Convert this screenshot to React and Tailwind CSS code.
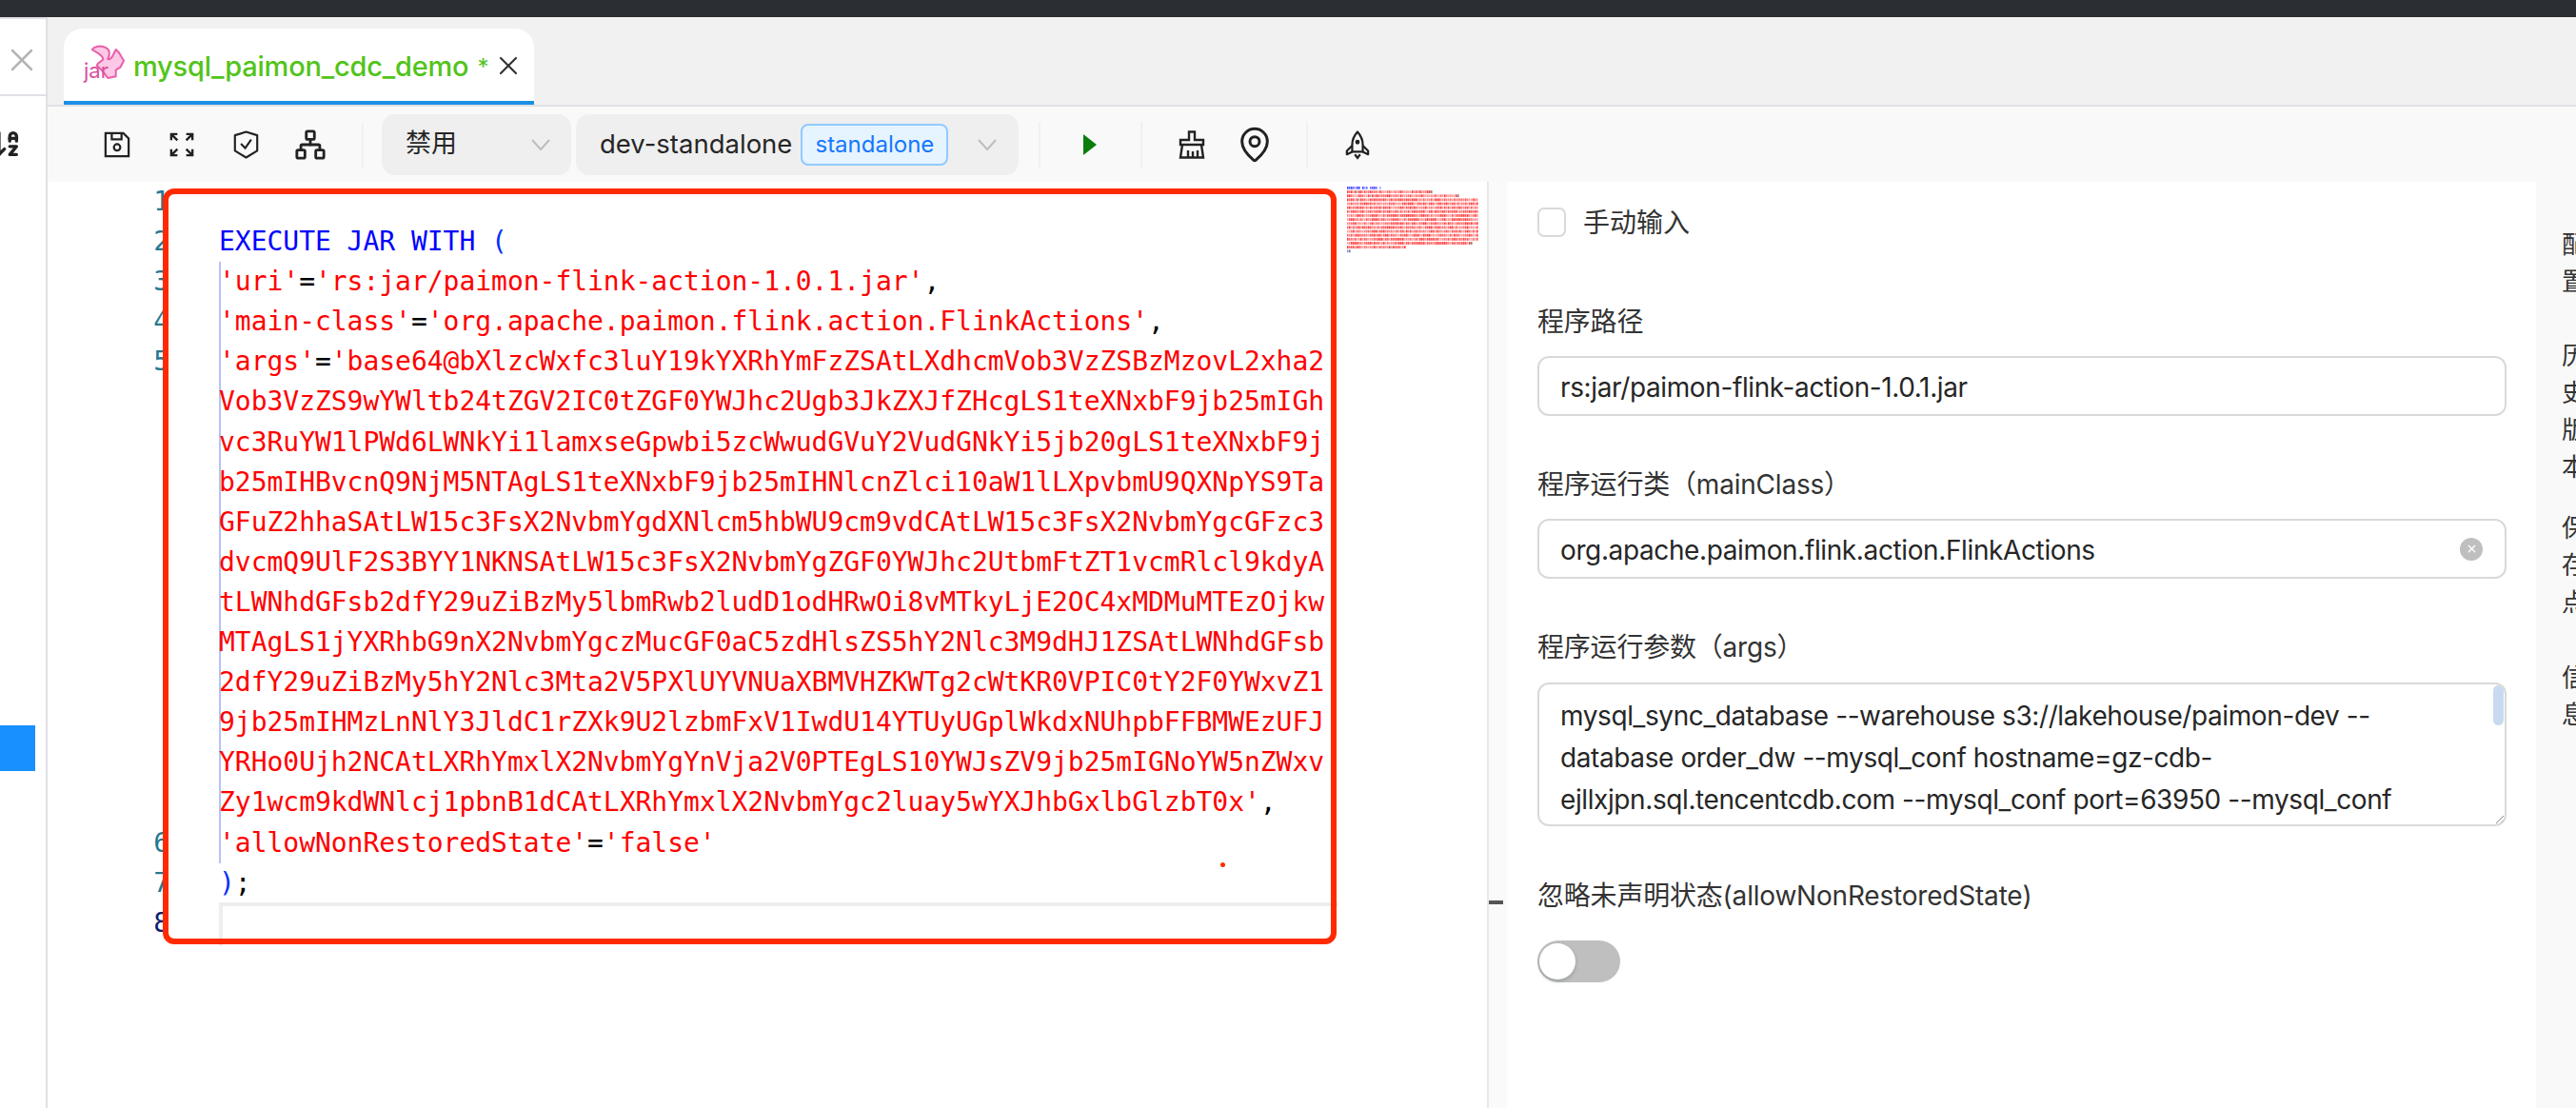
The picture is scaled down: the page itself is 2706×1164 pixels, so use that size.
import React from "react";
import { ArrowDownAZ, Network, MapPin, X } from "lucide-react";

const KW = "#0000ff";
const STR = "#ff0000";
const TXT = "#000000";

// each row is a list of [text, color]
const codeRows = [
  { n: 1, parts: [] },
  { n: 2, parts: [["EXECUTE JAR WITH ", KW], ["(", "#0431fa"]] },
  { n: 3, parts: [["'uri'", STR], ["=", TXT], ["'rs:jar/paimon-flink-action-1.0.1.jar'", STR], [",", TXT]] },
  { n: 4, parts: [["'main-class'", STR], ["=", TXT], ["'org.apache.paimon.flink.action.FlinkActions'", STR], [",", TXT]] },
  { n: 5, parts: [["'args'", STR], ["=", TXT], ["'base64@bXlzcWxfc3luY19kYXRhYmFzZSAtLXdhcmVob3VzZSBzMzovL2xha2", STR]] },
  { parts: [["Vob3VzZS9wYWltb24tZGV2IC0tZGF0YWJhc2Ugb3JkZXJfZHcgLS1teXNxbF9jb25mIGh", STR]] },
  { parts: [["vc3RuYW1lPWd6LWNkYi1lamxseGpwbi5zcWwudGVuY2VudGNkYi5jb20gLS1teXNxbF9j", STR]] },
  { parts: [["b25mIHBvcnQ9NjM5NTAgLS1teXNxbF9jb25mIHNlcnZlci10aW1lLXpvbmU9QXNpYS9Ta", STR]] },
  { parts: [["GFuZ2hhaSAtLW15c3FsX2NvbmYgdXNlcm5hbWU9cm9vdCAtLW15c3FsX2NvbmYgcGFzc3", STR]] },
  { parts: [["dvcmQ9UlF2S3BYY1NKNSAtLW15c3FsX2NvbmYgZGF0YWJhc2UtbmFtZT1vcmRlcl9kdyA", STR]] },
  { parts: [["tLWNhdGFsb2dfY29uZiBzMy5lbmRwb2ludD1odHRwOi8vMTkyLjE2OC4xMDMuMTEzOjkw", STR]] },
  { parts: [["MTAgLS1jYXRhbG9nX2NvbmYgczMucGF0aC5zdHlsZS5hY2Nlc3M9dHJ1ZSAtLWNhdGFsb", STR]] },
  { parts: [["2dfY29uZiBzMy5hY2Nlc3Mta2V5PXlUYVNUaXBMVHZKWTg2cWtKR0VPIC0tY2F0YWxvZ1", STR]] },
  { parts: [["9jb25mIHMzLnNlY3JldC1rZXk9U2lzbmFxV1IwdU14YTUyUGplWkdxNUhpbFFBMWEzUFJ", STR]] },
  { parts: [["YRHo0Ujh2NCAtLXRhYmxlX2NvbmYgYnVja2V0PTEgLS10YWJsZV9jb25mIGNoYW5nZWxv", STR]] },
  { parts: [["Zy1wcm9kdWNlcj1pbnB1dCAtLXRhYmxlX2NvbmYgc2luay5wYXJhbGxlbGlzbT0x'", STR], [",", TXT]] },
  { n: 6, parts: [["'allowNonRestoredState'", STR], ["=", TXT], ["'false'", STR]] },
  { n: 7, parts: [[")", "#0431fa"], [";", TXT]] },
];

const CodeRow = ({ row }) => (
  <div className="h-[42.1px] leading-[42.1px] whitespace-pre tracking-[-0.03px]">
    {row.parts.map(([text, color], i) => (
      <span key={i} style={{ color }}>
        {text}
      </span>
    ))}
  </div>
);

const Minimap = () => (
  <svg width="140" height="76" viewBox="0 0 140 76">
    {codeRows.map((row, y) => {
      let x = 0;
      return row.parts.map(([text, color]) =>
        text.split("").map((ch) => {
          x += 2;
          if (ch === " ") return null;
          return (
            <rect
              key={`${y}-${x}`}
              x={x - 2}
              y={(y - 1) * 4.15}
              width="1.6"
              height="2.8"
              fill={color === STR ? "#ff3030" : color === TXT ? "#777777" : "#3c3cff"}
              opacity={0.45 + (ch.charCodeAt(0) % 5) * 0.12}
            />
          );
        })
      );
    })}
  </svg>
);

const JarIcon = () => (
  <svg width="46" height="44" viewBox="0 0 46 44">
    <path
      d="M10.7 6 C13 3 20 1 25.7 4.3 C29 6 30 11 27.3 16 C30 17 31 15 32.3 12.7 L35.7 6 L39 9.3 L44 17.7 L40.7 24.3 L35.7 27.7 L35.7 34.3 L27.3 36 L22.3 29.3 L15.7 22.7 C17 19 22 18 22.3 16 C22 12 15 9 10.7 6 Z"
      fill="#fdc8e6"
      stroke="#ea5fa9"
      strokeWidth="2"
      strokeLinejoin="round"
    />
    <text x="2" y="36" fontSize="22" fill="#d94f9f" fontFamily="Inter, sans-serif">
      jar
    </text>
  </svg>
);

const SaveIcon = () => (
  <svg width="28" height="30" viewBox="0 0 30 30" fill="none" stroke="#222" strokeWidth="2.4">
    <path d="M2 2 H22 L28 8 V28 H2 Z" />
    <path d="M9 2 V9 H20 V2" />
    <circle cx="15" cy="18" r="3.6" />
  </svg>
);

const FullIcon = () => (
  <svg width="26" height="28" viewBox="0 0 28 28" fill="none" stroke="#222" strokeWidth="2.6">
    <path d="M2 9 V2 H9 M2 2 L9 9" />
    <path d="M19 2 H26 V9 M26 2 L19 9" />
    <path d="M2 19 V26 H9 M2 26 L9 19" />
    <path d="M26 19 V26 H19 M26 26 L19 19" />
  </svg>
);

const ShieldIcon = () => (
  <svg width="27" height="32" viewBox="0 0 30 34" fill="none" stroke="#222" strokeWidth="2.4">
    <path d="M15 2 L28 6 V24 L15 32 L2 24 V6 Z" strokeLinejoin="round" />
    <path d="M9 16 L14 21 L21 11" />
  </svg>
);

const BrushIcon = () => (
  <svg width="30" height="30" viewBox="0 0 30 30" fill="none" stroke="#222" strokeWidth="2.4">
    <path d="M12 1.5 H18 V10 H27 V15 H3 V10 H12 Z" />
    <path d="M5 15 L3 28.5 H27 L25 15" />
    <path d="M11 21 V28 M16 22 V28 M21 21 V28" />
  </svg>
);

const RocketIcon = () => (
  <svg width="26" height="32" viewBox="0 0 28 32" fill="none" stroke="#222" strokeWidth="2.4">
    <path d="M14 1.5 C18 6 20 10 20 16 V24 H8 V16 C8 10 10 6 14 1.5 Z" strokeLinejoin="round" />
    <path d="M8 17 L2 23 V27 L8 24 M20 17 L26 23 V27 L20 24" strokeLinejoin="round" />
    <path d="M11 27 L14 31 L17 27" />
    <circle cx="14" cy="13" r="1.4" fill="#222" />
  </svg>
);

const Chevron = () => (
  <svg width="20" height="12" viewBox="0 0 20 12" fill="none" stroke="#bdbdbd" strokeWidth="2">
    <path d="M1 1 L10 11 L19 1" />
  </svg>
);

const Divider = ({ className }) => <div className={`w-[2px] h-[48px] bg-[#f1f1f1] ${className}`} />;

const Field = ({ label, children, className }) => (
  <div className={className}>
    <div className="h-[40px] text-[28px] leading-[42px] tracking-[-0.2px] text-[#333]">{label}</div>
    {children}
  </div>
);

const TextInput = ({ value, children }) => (
  <div className="mt-[17px] h-[63px] w-[1018px] border-2 border-[#d9d9d9] rounded-[12px] bg-white pl-[22px] pr-[22px] flex items-center justify-between text-[28px] tracking-[-0.38px] text-[#262626]">
    <span className="pt-[2px]">{value}</span>
    {children}
  </div>
);

const App = () => {
  return (
    <div className="w-[2706px] h-[1164px] overflow-hidden flex flex-col bg-white font-['Inter','Noto_Sans_CJK_SC',sans-serif]">
      <div className="h-[18px] shrink-0 bg-[#2b2f33]" />

      <div className="flex flex-1 min-h-0">
        {/* left sidebar, mostly cut off */}
        <div className="w-[50px] shrink-0 border-r-2 border-[#e0e0e6] flex flex-col">
          <div className="h-[83px] border-t-2 border-b-2 border-[#e0e0e6] flex items-center justify-end pr-[5px]">
            <X size={40} strokeWidth={1.5} color="#b5b5b5" className="mt-[6px]" />
          </div>
          <div className="h-[78px] overflow-hidden relative flex items-start pt-[33px]">
            <ArrowDownAZ size={34} strokeWidth={2.4} color="#222" className="ml-[-11px] shrink-0" />
          </div>
          <div className="mt-[583px] h-[48px] w-[37px] bg-[#1890ff]" />
        </div>

        <div className="flex-1 min-w-0 flex flex-col">
          {/* tab bar */}
          <div className="h-[94px] shrink-0 bg-[#f1f1f1] border-b-2 border-[#e0e0e6] pl-[17px] pt-[12px]">
            <div className="w-[494px] h-[80px] bg-white rounded-t-[20px] border-b-4 border-[#1a8fe8] flex items-center pl-[19px] pr-[11px]">
              <JarIcon />
              <span className="ml-[8px] text-[29px] font-medium text-[#52c41a] mt-[4px] tracking-[-0.2px]">mysql_paimon_cdc_demo</span>
              <span className="ml-[9px] text-[24px] text-[#52c41a] mt-[6px]">*</span>
              <X size={32} strokeWidth={1.6} color="#333" className="ml-auto mt-[2px]" />
            </div>
          </div>

          {/* toolbar */}
          <div className="h-[79px] shrink-0 bg-[#f9f9f9] flex items-center pl-[59px]">
            <SaveIcon />
            <div className="ml-[41px]"><FullIcon /></div>
            <div className="ml-[41px]"><ShieldIcon /></div>
            <Network size={34} strokeWidth={2} color="#222" className="ml-[37px]" />
            <Divider className="ml-[37px]" />
            <div className="ml-[19px] w-[199px] h-[64px] rounded-[14px] bg-[#efefef] flex items-center justify-between pl-[25px] pr-[22px] text-[27px] text-[#262626]">
              <span>禁用</span>
              <Chevron />
            </div>
            <div className="ml-[5px] w-[465px] h-[64px] rounded-[14px] bg-[#efefef] flex items-center pl-[25px] pr-[23px] text-[27.5px] text-[#262626]">
              <span>dev-standalone</span>
              <span className="ml-[9px] h-[44px] w-[155px] flex items-center justify-center rounded-[8px] border-2 border-[#91caff] bg-[#e6f4ff] text-[#1677ff] text-[24px]">standalone</span>
              <span className="ml-auto"><Chevron /></span>
            </div>
            <Divider className="ml-[21px]" />
            <div className="ml-[45px] w-0 h-0 border-y-[11px] border-y-transparent border-l-[14px] border-l-[#0a7d0a]" />
            <Divider className="ml-[46px]" />
            <div className="ml-[37px]"><BrushIcon /></div>
            <MapPin size={40} strokeWidth={1.8} color="#222" className="ml-[31px]" />
            <Divider className="ml-[34px]" />
            <div className="ml-[39px]"><RocketIcon /></div>
          </div>

          <div className="flex-1 min-h-0 flex">
            {/* editor */}
            <div className="w-[1514px] shrink-0 relative flex font-['DejaVu_Sans_Mono',monospace] text-[28px]">
              <div className="w-[180px] shrink-0 pr-[52px] text-right text-[#237893]">
                <div className="h-[42.1px] leading-[42.1px]">1</div>
                {codeRows.slice(1).map((row, i) => (
                  <div key={i} className="h-[42.1px] leading-[42.1px]">{row.n}</div>
                ))}
                <div className="h-[42.1px] leading-[42.1px] text-[#0b216f]">8</div>
              </div>
              <div className="w-[1176px] shrink-0">
                <div className="h-[42.1px]" />
                <CodeRow row={codeRows[1]} />
                <div className="shadow-[inset_2px_0_0_#b6c2f5]">
                  {codeRows.slice(2, 17).map((row, i) => (
                    <CodeRow key={i} row={row} />
                  ))}
                </div>
                <CodeRow row={codeRows[17]} />
                <div className="h-[46px] mt-[-1px] border-t-4 border-l-4 border-[#eeeeee]" />
              </div>
              <div className="w-[158px] shrink-0 pl-[9px] pt-[5px] border-r-2 border-[#e8e8e8]">
                <Minimap />
              </div>

              {/* red annotation drawn over the screenshot */}
              <div className="absolute left-[121px] top-[7px] w-[1233px] h-[794px] border-[6px] border-[#ff2a00] rounded-[12px] pointer-events-none" />
              <div className="absolute left-[1232px] top-[715px] w-[5px] h-[5px] rounded-full bg-[#ff2a00]" />
            </div>

            {/* splitter */}
            <div className="w-[19px] shrink-0 bg-[#fafafa] relative">
              <div className="absolute left-0 top-[755px] w-[15px] h-[4px] bg-[#555]" />
            </div>

            {/* form panel */}
            <div className="w-[1081px] shrink-0 pl-[32px] pt-[26px]">
              <label className="flex items-center h-[32px]">
                <span className="w-[30px] h-[31px] rounded-[7px] border-2 border-[#d9d9d9] bg-white" />
                <span className="ml-[18px] pt-[2px] text-[28px] text-[#333]">手动输入</span>
              </label>

              <Field label="程序路径" className="mt-[68px]">
                <TextInput value="rs:jar/paimon-flink-action-1.0.1.jar" />
              </Field>

              <Field label="程序运行类（mainClass）" className="mt-[51px]">
                <TextInput value="org.apache.paimon.flink.action.FlinkActions">
                  <span className="w-[24px] h-[24px] rounded-full bg-[#bfbfbf] flex items-center justify-center mr-[1px]">
                    <X size={13} strokeWidth={2.5} color="#fff" />
                  </span>
                </TextInput>
              </Field>

              <Field label="程序运行参数（args）" className="mt-[51px]">
                <div className="mt-[18px] relative h-[151px] w-[1018px] border-2 border-[#d9d9d9] rounded-[12px] bg-white overflow-hidden pl-[22px] pt-[11px] text-[28px] leading-[44px] tracking-[-0.4px] text-[#262626] whitespace-pre">
                  <div>mysql_sync_database --warehouse s3://lakehouse/paimon-dev --</div>
                  <div>database order_dw --mysql_conf hostname=gz-cdb-</div>
                  <div>ejllxjpn.sql.tencentcdb.com --mysql_conf port=63950 --mysql_conf</div>
                  <div className="absolute right-[1px] top-[1px] w-[11px] h-[42px] rounded-[6px] bg-[#c8daf0]" />
                  <svg className="absolute right-0 bottom-0" width="11" height="12" viewBox="0 0 11 12" fill="none" stroke="#888" strokeWidth="1">
                    <path d="M2 11 L10 3 M6 11 L10 7" />
                  </svg>
                </div>
              </Field>

              <Field label="忽略未声明状态(allowNonRestoredState)" className="mt-[52px]">
                <div className="mt-[28px] w-[87px] h-[44px] rounded-full bg-[#bfbfbf] flex items-center pl-[2px]">
                  <span className="w-[38px] h-[38px] rounded-full bg-white shadow-[0_2px_4px_rgba(0,35,11,0.2)]" />
                </div>
              </Field>
            </div>

            {/* right tabs, cut off by the window edge */}
            <div className="flex-1 min-w-0 bg-[#f9f9f9] overflow-hidden pl-[27px] pt-[46px] text-[26px] leading-[39px] text-[#333]">
              <div className="w-[26px]">配置</div>
              <div className="w-[26px] mt-[39px]">历史版本</div>
              <div className="w-[26px] mt-[25px]">保存点</div>
              <div className="w-[26px] mt-[40px]">信息</div>
            </div>
          </div>
        </div>
      </div>
    </div>
  );
};

export default App;
